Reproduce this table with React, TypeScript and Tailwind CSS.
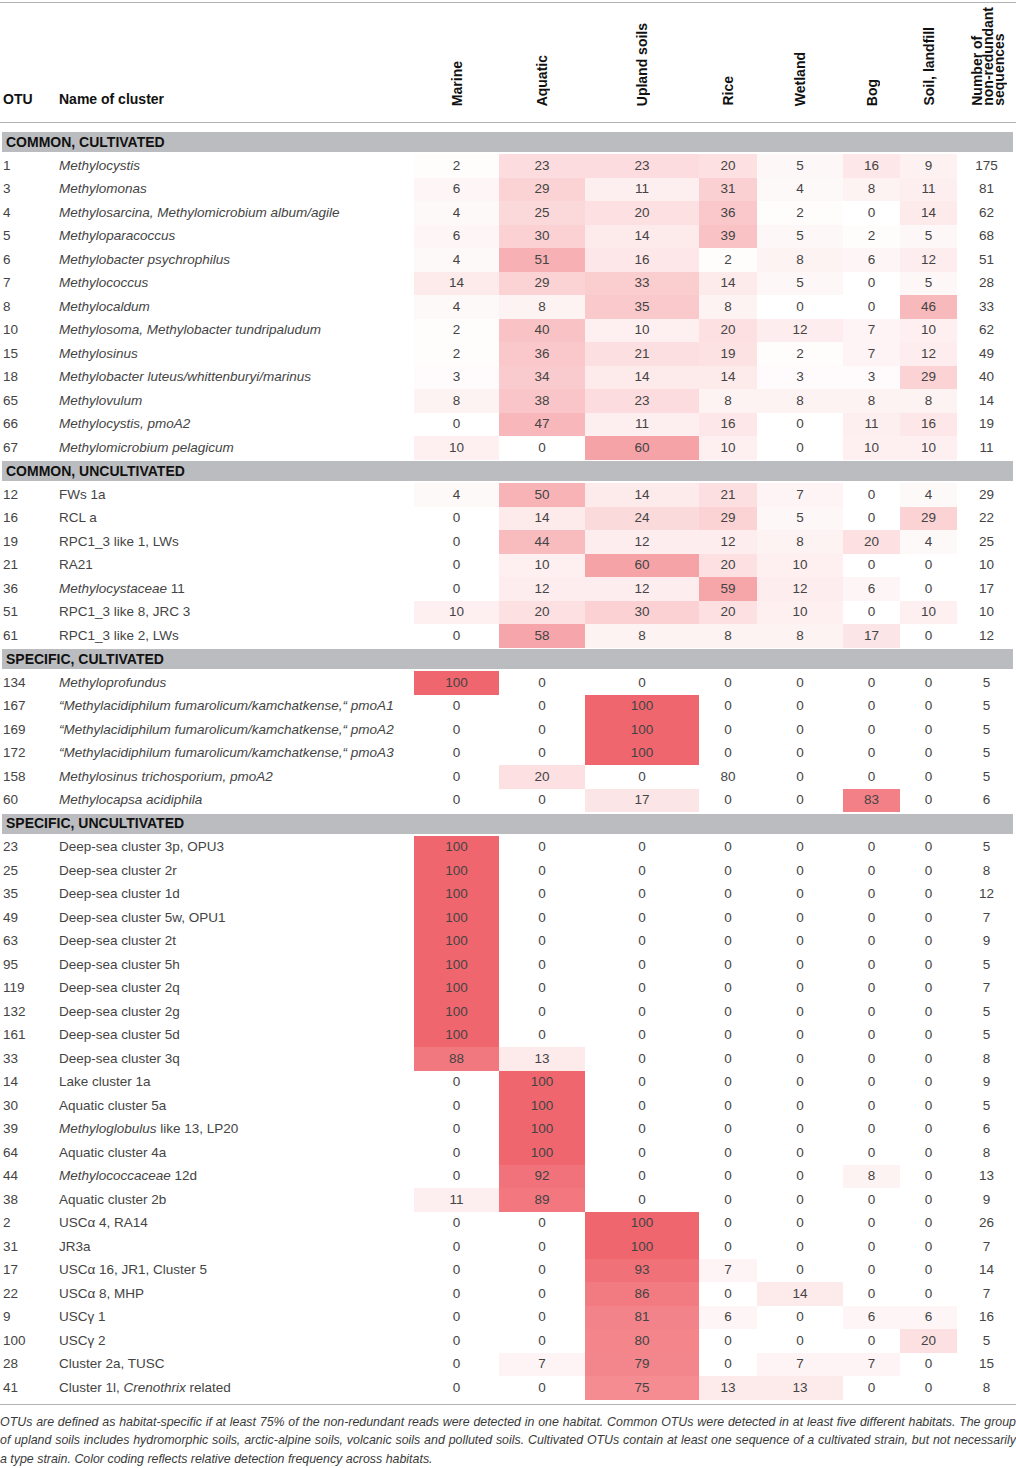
import React from 'react';

type Row = { otu: number; name: React.ReactNode; v: number[]; n: number; plain?: number[] };

const I = ({ children }: { children: React.ReactNode }) => <i>{children}</i>;

const MA = (s: string) => (
  <I>
    “Methylacidiphilum fumarolicum/kamchatkense,“ {s}
  </I>
);

const sections: { title: string; rows: Row[] }[] = [
  {
    title: 'COMMON, CULTIVATED',
    rows: [
      { otu: 1, name: <I>Methylocystis</I>, v: [2, 23, 23, 20, 5, 16, 9], n: 175 },
      { otu: 3, name: <I>Methylomonas</I>, v: [6, 29, 11, 31, 4, 8, 11], n: 81 },
      { otu: 4, name: <I>Methylosarcina, Methylomicrobium album/agile</I>, v: [4, 25, 20, 36, 2, 0, 14], n: 62 },
      { otu: 5, name: <I>Methyloparacoccus</I>, v: [6, 30, 14, 39, 5, 2, 5], n: 68 },
      { otu: 6, name: <I>Methylobacter psychrophilus</I>, v: [4, 51, 16, 2, 8, 6, 12], n: 51 },
      { otu: 7, name: <I>Methylococcus</I>, v: [14, 29, 33, 14, 5, 0, 5], n: 28 },
      { otu: 8, name: <I>Methylocaldum</I>, v: [4, 8, 35, 8, 0, 0, 46], n: 33 },
      { otu: 10, name: <I>Methylosoma, Methylobacter tundripaludum</I>, v: [2, 40, 10, 20, 12, 7, 10], n: 62 },
      { otu: 15, name: <I>Methylosinus</I>, v: [2, 36, 21, 19, 2, 7, 12], n: 49 },
      { otu: 18, name: <I>Methylobacter luteus/whittenburyi/marinus</I>, v: [3, 34, 14, 14, 3, 3, 29], n: 40 },
      { otu: 65, name: <I>Methylovulum</I>, v: [8, 38, 23, 8, 8, 8, 8], n: 14 },
      { otu: 66, name: <I>Methylocystis, pmoA2</I>, v: [0, 47, 11, 16, 0, 11, 16], n: 19 },
      { otu: 67, name: <I>Methylomicrobium pelagicum</I>, v: [10, 0, 60, 10, 0, 10, 10], n: 11 },
    ],
  },
  {
    title: 'COMMON, UNCULTIVATED',
    rows: [
      { otu: 12, name: 'FWs 1a', v: [4, 50, 14, 21, 7, 0, 4], n: 29 },
      { otu: 16, name: 'RCL a', v: [0, 14, 24, 29, 5, 0, 29], n: 22 },
      { otu: 19, name: 'RPC1_3 like 1, LWs', v: [0, 44, 12, 12, 8, 20, 4], n: 25 },
      { otu: 21, name: 'RA21', v: [0, 10, 60, 20, 10, 0, 0], n: 10 },
      { otu: 36, name: <><I>Methylocystaceae</I>{'\u00a0'}11</>, v: [0, 12, 12, 59, 12, 6, 0], n: 17 },
      { otu: 51, name: 'RPC1_3 like 8, JRC 3', v: [10, 20, 30, 20, 10, 0, 10], n: 10 },
      { otu: 61, name: 'RPC1_3 like 2, LWs', v: [0, 58, 8, 8, 8, 17, 0], n: 12 },
    ],
  },
  {
    title: 'SPECIFIC, CULTIVATED',
    rows: [
      { otu: 134, name: <I>Methyloprofundus</I>, v: [100, 0, 0, 0, 0, 0, 0], n: 5 },
      { otu: 167, name: MA('pmoA1'), v: [0, 0, 100, 0, 0, 0, 0], n: 5 },
      { otu: 169, name: MA('pmoA2'), v: [0, 0, 100, 0, 0, 0, 0], n: 5 },
      { otu: 172, name: MA('pmoA3'), v: [0, 0, 100, 0, 0, 0, 0], n: 5 },
      // the 80 is printed without a colour in the source table
      { otu: 158, name: <I>Methylosinus trichosporium, pmoA2</I>, v: [0, 20, 0, 80, 0, 0, 0], n: 5, plain: [3] },
      { otu: 60, name: <I>Methylocapsa acidiphila</I>, v: [0, 0, 17, 0, 0, 83, 0], n: 6 },
    ],
  },
  {
    title: 'SPECIFIC, UNCULTIVATED',
    rows: [
      { otu: 23, name: 'Deep-sea cluster 3p, OPU3', v: [100, 0, 0, 0, 0, 0, 0], n: 5 },
      { otu: 25, name: 'Deep-sea cluster 2r', v: [100, 0, 0, 0, 0, 0, 0], n: 8 },
      { otu: 35, name: 'Deep-sea cluster 1d', v: [100, 0, 0, 0, 0, 0, 0], n: 12 },
      { otu: 49, name: 'Deep-sea cluster 5w, OPU1', v: [100, 0, 0, 0, 0, 0, 0], n: 7 },
      { otu: 63, name: 'Deep-sea cluster 2t', v: [100, 0, 0, 0, 0, 0, 0], n: 9 },
      { otu: 95, name: 'Deep-sea cluster 5h', v: [100, 0, 0, 0, 0, 0, 0], n: 5 },
      { otu: 119, name: 'Deep-sea cluster 2q', v: [100, 0, 0, 0, 0, 0, 0], n: 7 },
      { otu: 132, name: 'Deep-sea cluster 2g', v: [100, 0, 0, 0, 0, 0, 0], n: 5 },
      { otu: 161, name: 'Deep-sea cluster 5d', v: [100, 0, 0, 0, 0, 0, 0], n: 5 },
      { otu: 33, name: 'Deep-sea cluster 3q', v: [88, 13, 0, 0, 0, 0, 0], n: 8 },
      { otu: 14, name: 'Lake cluster 1a', v: [0, 100, 0, 0, 0, 0, 0], n: 9 },
      { otu: 30, name: 'Aquatic cluster 5a', v: [0, 100, 0, 0, 0, 0, 0], n: 5 },
      { otu: 39, name: <><I>Methyloglobulus</I>{'\u00a0'}like 13, LP20</>, v: [0, 100, 0, 0, 0, 0, 0], n: 6 },
      { otu: 64, name: 'Aquatic cluster 4a', v: [0, 100, 0, 0, 0, 0, 0], n: 8 },
      { otu: 44, name: <><I>Methylococcaceae</I>{'\u00a0'}12d</>, v: [0, 92, 0, 0, 0, 8, 0], n: 13 },
      { otu: 38, name: 'Aquatic cluster 2b', v: [11, 89, 0, 0, 0, 0, 0], n: 9 },
      { otu: 2, name: 'USCα 4, RA14', v: [0, 0, 100, 0, 0, 0, 0], n: 26 },
      { otu: 31, name: 'JR3a', v: [0, 0, 100, 0, 0, 0, 0], n: 7 },
      { otu: 17, name: 'USCα 16, JR1, Cluster 5', v: [0, 0, 93, 7, 0, 0, 0], n: 14 },
      { otu: 22, name: 'USCα 8, MHP', v: [0, 0, 86, 0, 14, 0, 0], n: 7 },
      { otu: 9, name: 'USCγ 1', v: [0, 0, 81, 6, 0, 6, 6], n: 16 },
      { otu: 100, name: 'USCγ 2', v: [0, 0, 80, 0, 0, 0, 20], n: 5 },
      { otu: 28, name: 'Cluster 2a, TUSC', v: [0, 7, 79, 0, 7, 7, 0], n: 15 },
      { otu: 41, name: <>Cluster 1l,{'\u00a0'}<I>Crenothrix</I>{'\u00a0'}related</>, v: [0, 0, 75, 13, 13, 0, 0], n: 8 },
    ],
  },
];

const habitats = ['Marine', 'Aquatic', 'Upland soils', 'Rice', 'Wetland', 'Bog', 'Soil, landfill'];

const grid =
  'grid grid-cols-[59px_355px_85px_86px_114px_58px_86px_57px_57px_59px]';

// white -> red, linear in the detection frequency
const heat = (v: number) => {
  if (!v) return 'transparent';
  const t = v / 100;
  const mix = (c: number) => Math.round(255 - (255 - c) * t);
  return `rgb(${mix(240)},${mix(102)},${mix(110)})`;
};

const caption = [
  'OTUs are defined as habitat-specific if at least 75% of the non-redundant reads were detected in one habitat. Common OTUs were detected in at least five different habitats. The group',
  'of upland soils includes hydromorphic soils, arctic-alpine soils, volcanic soils and polluted soils. Cultivated OTUs contain at least one sequence of a cultivated strain, but not necessarily',
];

const App: React.FC = () => {
  return (
    <div className="w-[1016px] bg-white font-['Liberation_Sans',Arial,sans-serif] text-[#444]">
      <div className="h-[2px]" />
      <div className="h-px bg-[#b4b4b4]" />

      {/* column headings */}
      <div className={`${grid} h-[119px] text-[14px] font-bold text-[#111]`}>
        <div className="flex items-end pb-[12px] pl-[3px]">OTU</div>
        <div className="flex items-end pb-[12px]">Name of cluster</div>
        {habitats.map((h) => (
          <div key={h} className="flex items-end justify-center pb-[16px]">
            <span className="rotate-180 whitespace-nowrap leading-none [writing-mode:vertical-rl]">
              {h}
            </span>
          </div>
        ))}
        <div className="flex items-end justify-center pb-[16px] pl-[4px]">
          <span className="rotate-180 leading-[11px] [writing-mode:vertical-rl]">
            Number of
            <br />
            non-redundant
            <br />
            sequences
          </span>
        </div>
      </div>
      <div className="h-px bg-[#b4b4b4]" />

      <div className="h-[9px]" />
      {sections.map((s, si) => (
        <div key={s.title} className={si > 0 ? 'mt-[1.5px]' : ''}>
          <div className="ml-[2px] mr-[3px] flex h-[20px] items-center bg-[#bbbcbf] pl-[4px] text-[14px] font-bold text-[#111]">
            {s.title}
          </div>
          <div className="h-[2px]" />
          {s.rows.map((r) => (
            <div key={r.otu + '-' + r.n} className={`${grid} h-[23.5px] text-[13.5px]`}>
              <div className="flex items-center pl-[3px]">{r.otu}</div>
              <div className="flex items-center whitespace-nowrap">{r.name}</div>
              {r.v.map((v, i) => (
                <div
                  key={i}
                  className="flex items-center justify-center"
                  style={{ backgroundColor: r.plain?.includes(i) ? 'transparent' : heat(v) }}
                >
                  {v}
                </div>
              ))}
              <div className="flex items-center justify-center">{r.n}</div>
            </div>
          ))}
        </div>
      ))}

      <div className="h-[4px]" />
      <div className="h-px bg-[#b4b4b4]" />

      <div className="pt-[8px] text-[12.4px] italic leading-[18.5px] text-[#3a3a3a]">
        {caption.map((line) => (
          <div key={line} className="text-justify [text-align-last:justify]">
            {line}
          </div>
        ))}
        <div>a type strain. Color coding reflects relative detection frequency across habitats.</div>
      </div>
    </div>
  );
};

export default App;
